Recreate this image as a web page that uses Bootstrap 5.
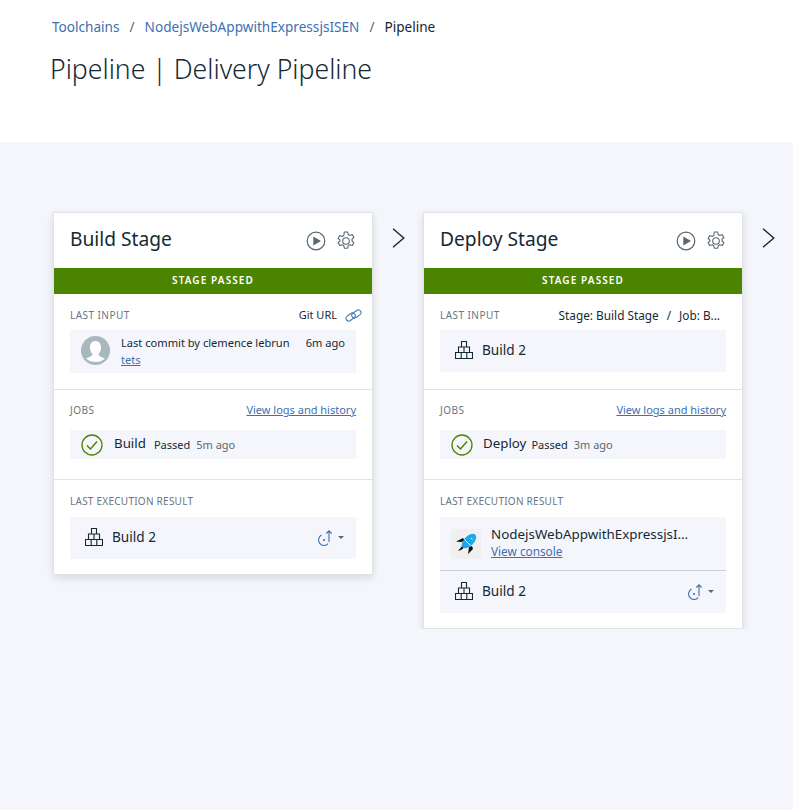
<!DOCTYPE html>
<html lang="en">
<head>
    <meta charset="UTF-8" />
    <title>Pipeline | Delivery Pipeline</title>
    <link href="https://cdn.jsdelivr.net/npm/bootstrap@5.3.2/dist/css/bootstrap.min.css" rel="stylesheet" />
    <style>
        body { font-family: "Noto Sans", "Open Sans", sans-serif; color: #152935; background: #f4f6fb; font-size: 12px; }
        a { color: #3d70b2; }
        .page-head { height: 142px; background: #fff; padding: 18px 0 0 52px; }
        .page-head .breadcrumb { font-size: 13.6px; margin-bottom: 16px; height: 18px; line-height: 18px; --bs-breadcrumb-item-padding-x: 10px; --bs-breadcrumb-divider-color: #5a6872; }
        .page-head .breadcrumb a { text-decoration: none; }
        .page-head .breadcrumb-item.active { color: #152935; }
        .page-title { font-size: 26.6px; font-weight: 300; line-height: 34px; margin: 0 0 0 -2px; color: #152935; }
        .board { padding: 70px 0 0 53px; }
        .stage-card { width: 320px; border: 1px solid #dfe3e6; border-radius: 0; box-shadow: 0 3px 8px rgba(0, 0, 0, .12); background: #fff; }
        .stage-top { height: 55px; padding: 0 16px; }
        .stage-name { font-size: 19.2px; margin: 0 0 4px; font-weight: 400; line-height: 1; }
        .stage-status { height: 26px; line-height: 24px; background: #4b8400; color: #fff; font-size: 10px; font-weight: 600; letter-spacing: 1.1px; text-align: center; }
        .stage-part { padding: 14px 16px 16px; border-bottom: 1px solid #dfe3e6; }
        .stage-part.first { height: 96px; }
        .stage-part.jobs { height: 90px; padding-top: 13px; }
        .stage-part.last { border-bottom: 0; padding-bottom: 15px; }
        .part-label { height: 14px; line-height: 14px; margin-bottom: 9px; font-size: 10px; letter-spacing: .25px; color: #69767f; }
        .part-head { height: 14px; line-height: 14px; margin-bottom: 8px; }
        .jobs .part-head { margin-bottom: 13px; }
        .part-head .part-label { margin: 0; letter-spacing: .45px; }
        .part-head a { font-size: 11px; }
        .git-link { font-size: 11px; margin-right: -6px; }
        .input-path { font-size: 11.8px; padding-right: 6px; }
        .path-slash { margin: 0 8px; }
        .inset-box { background: #f4f6fb; }
        .commit-box { height: 43px; padding: 0 11px 2px; font-size: 11.1px; line-height: 17px; }
        .commit-avatar { margin-right: 11px; }
        .build-box { height: 42px; padding: 0 12px 2px 15px; font-size: 13.6px; }
        .build-icon { margin-right: 9px; }
        .job-box { height: 29px; padding: 0 11px; }
        .job-name { font-size: 13.3px; margin: 0 8px 0 11px; padding-bottom: 2px; }
        .job-name.tight { margin: 0 5px 0 10px; }
        .job-state { font-size: 11px; margin-right: 6px; padding-top: 2px; }
        .job-time { font-size: 11px; color: #5a6872; padding-top: 2px; }
        .app-box { height: 54px; padding: 0 11px; border-bottom: 1px solid #c7d2d9; }
        .app-tile { width: 30px; height: 30px; background: #f0f0f0; flex: none; border-radius: 2px; margin-right: 10px; }
        .app-name { font-size: 13.4px; line-height: 17px; }
        .app-link { font-size: 11.8px; line-height: 17px; }
        .next-stage { width: 50px; padding-top: 16px; }
        .caret-down { width: 0; height: 0; border-left: 3.5px solid transparent; border-right: 3.5px solid transparent; border-top: 3.5px solid #5a6872; }
        .play-icon { margin-right: 10px; }
        .restore-icon { margin: 2px 6px 0 0; }
    </style>
</head>
<body>
    <svg width="0" height="0" class="d-block" aria-hidden="true">
        <symbol id="blocks" viewBox="0 0 18 18">
            <path d="M6.500.5h5v5.500h-5zM3.500 6h11v5.500h-11zM9 6v5.500M.5 11.500h17v6H.5zM6.200 11.500v6M11.800 11.500v6" fill="none" stroke="#152935" stroke-width="1.100" />
        </symbol>
        <symbol id="rollback" viewBox="0 0 14 16">
            <path d="M3.500 5.100A5.500 5.500 0 1 0 10.200 13.600" fill="none" stroke="#3d70b2" stroke-width="1.100" />
            <path d="M11 12V.8M8.300 3.500 11 .8l2.700 2.700" fill="none" stroke="#3d70b2" stroke-width="1.100" />
            <circle cx="6" cy="10" r="1.100" fill="#3d70b2" />
        </symbol>
        <symbol id="play" viewBox="0 0 20 20">
            <circle cx="10" cy="10" r="8.800" fill="none" stroke="#5a6872" stroke-width="1.200" />
            <path d="M7.300 5.400 15 10l-7.700 4.600z" fill="#5a6872" />
        </symbol>
        <symbol id="gear" viewBox="0 0 20 20">
            <path d="M8.300 1h3.400l.5 2.500 1.600.9 2.400-.8 1.700 2.900-1.900 1.700v1.800l1.900 1.700-1.700 2.900-2.400-.8-1.600.9-.5 2.500H8.300l-.5-2.500-1.600-.9-2.400.8-1.700-2.900 1.900-1.700V9.200L2.100 7.500l1.700-2.900 2.400.8 1.600-.9z" fill="none" stroke="#5a6872" stroke-width="1.100" stroke-linejoin="round" />
            <circle cx="10" cy="10" r="3.300" fill="none" stroke="#5a6872" stroke-width="1.100" />
        </symbol>
        <symbol id="chevron" viewBox="0 0 13 20">
            <path d="M1 .8 11.800 10 1 19.200" fill="none" stroke="#152935" stroke-width="1.400" />
        </symbol>
        <symbol id="passed" viewBox="0 0 22 22">
            <circle cx="11" cy="11" r="10" fill="none" stroke="#4b8400" stroke-width="1.300" />
            <path d="M6 11.500 9.500 15 16 7.500" fill="none" stroke="#4b8400" stroke-width="1.500" />
        </symbol>
    </svg>

    <header class="page-head">
        <nav aria-label="breadcrumb">
            <ol class="breadcrumb">
                <li class="breadcrumb-item"><a href="#">Toolchains</a></li>
                <li class="breadcrumb-item"><a href="#">NodejsWebAppwithExpressjsISEN</a></li>
                <li class="breadcrumb-item active" aria-current="page">Pipeline</li>
            </ol>
        </nav>
        <h1 class="page-title">Pipeline | Delivery Pipeline</h1>
    </header>

    <main class="board d-flex align-items-start">
        <section class="card stage-card flex-shrink-0">
            <div class="stage-top d-flex align-items-center">
                <h2 class="stage-name flex-grow-1">Build Stage</h2>
                <svg width="20" height="20" class="play-icon"><use href="#play" /></svg>
                <svg width="20" height="20"><use href="#gear" /></svg>
            </div>
            <div class="stage-status">STAGE PASSED</div>
            <div class="stage-part first">
                <div class="part-head d-flex justify-content-between align-items-center">
                    <div class="part-label">LAST INPUT</div>
                    <div class="git-link d-flex align-items-center gap-2">Git URL
                        <svg width="17" height="13" viewBox="0 0 17 13">
                            <rect x="0.600" y="5.300" width="10" height="5.400" rx="2.700" transform="rotate(-35 5.600 8)" fill="none" stroke="#3d70b2" stroke-width="1" />
                            <rect x="6.400" y="2.300" width="10" height="5.400" rx="2.700" transform="rotate(-35 11.400 5)" fill="none" stroke="#3d70b2" stroke-width="1" />
                        </svg>
                    </div>
                </div>
                <div class="inset-box commit-box d-flex align-items-center">
                    <svg width="29" height="29" viewBox="0 0 29 29" class="flex-shrink-0 commit-avatar">
                        <circle cx="14.500" cy="14.500" r="14.500" fill="#a9b8bf" />
                        <path d="M14.500 5c4 0 5.500 3 5.500 6.500 0 3-1.500 5.500-2.500 6.500 0 2 3 3 6.500 4.500a14.500 14.500 0 0 1-19 0c3.500-1.500 6.500-2.500 6.500-4.500-1-1-2.500-3.500-2.500-6.500C9 8 10.500 5 14.500 5z" fill="#fff" />
                    </svg>
                    <div class="flex-grow-1">
                        <div class="d-flex justify-content-between"><span>Last commit by clemence lebrun</span><span>6m ago</span></div>
                        <a href="#">tets</a>
                    </div>
                </div>
            </div>
            <div class="stage-part jobs">
                <div class="part-head d-flex justify-content-between align-items-center">
                    <div class="part-label">JOBS</div>
                    <a href="#">View logs and history</a>
                </div>
                <div class="inset-box job-box d-flex align-items-center">
                    <svg width="22" height="22"><use href="#passed" /></svg>
                    <span class="job-name">Build</span><span class="job-state">Passed</span><span class="job-time">5m ago</span>
                </div>
            </div>
            <div class="stage-part last">
                <div class="part-label">LAST EXECUTION RESULT</div>
                <div class="inset-box build-box d-flex align-items-center">
                    <svg width="18" height="18" class="build-icon"><use href="#blocks" /></svg>
                    <span class="flex-grow-1">Build 2</span>
                    <svg width="14" height="16" class="restore-icon"><use href="#rollback" /></svg>
                    <span class="caret-down"></span>
                </div>
            </div>
        </section>

        <div class="next-stage d-flex justify-content-center flex-shrink-0">
            <svg width="13" height="20"><use href="#chevron" /></svg>
        </div>

        <section class="card stage-card flex-shrink-0">
            <div class="stage-top d-flex align-items-center">
                <h2 class="stage-name flex-grow-1">Deploy Stage</h2>
                <svg width="20" height="20" class="play-icon"><use href="#play" /></svg>
                <svg width="20" height="20"><use href="#gear" /></svg>
            </div>
            <div class="stage-status">STAGE PASSED</div>
            <div class="stage-part first">
                <div class="part-head d-flex justify-content-between align-items-center">
                    <div class="part-label">LAST INPUT</div>
                    <div class="input-path">Stage: Build Stage<span class="path-slash">/</span>Job: B...</div>
                </div>
                <div class="inset-box build-box d-flex align-items-center">
                    <svg width="18" height="18" class="build-icon"><use href="#blocks" /></svg>
                    <span>Build 2</span>
                </div>
            </div>
            <div class="stage-part jobs">
                <div class="part-head d-flex justify-content-between align-items-center">
                    <div class="part-label">JOBS</div>
                    <a href="#">View logs and history</a>
                </div>
                <div class="inset-box job-box d-flex align-items-center">
                    <svg width="22" height="22"><use href="#passed" /></svg>
                    <span class="job-name tight">Deploy</span><span class="job-state">Passed</span><span class="job-time">3m ago</span>
                </div>
            </div>
            <div class="stage-part last">
                <div class="part-label">LAST EXECUTION RESULT</div>
                <div class="inset-box">
                    <div class="app-box d-flex align-items-center">
                        <div class="app-tile d-flex align-items-center justify-content-center">
                            <svg width="22" height="22" viewBox="0 0 22 22">
                                <path d="M1 8.500 8 5l2 3-4 1zM3 18l5-6 2 2-4 3zM13 21l1-7 3-1 1 3z" fill="#111" />
                                <ellipse cx="14" cy="8" rx="9" ry="4.800" transform="rotate(-45 14 8)" fill="#1ea7e8" />
                                <path d="M9.500 6.500l6 6M16 5l1.500 1.500" stroke="#fff" stroke-width="1" />
                            </svg>
                        </div>
                        <div>
                            <div class="app-name">NodejsWebAppwithExpressjsI…</div>
                            <a href="#" class="app-link">View console</a>
                        </div>
                    </div>
                    <div class="build-box d-flex align-items-center">
                        <svg width="18" height="18" class="build-icon"><use href="#blocks" /></svg>
                        <span class="flex-grow-1">Build 2</span>
                        <svg width="14" height="16" class="restore-icon"><use href="#rollback" /></svg>
                        <span class="caret-down"></span>
                    </div>
                </div>
            </div>
        </section>

        <div class="next-stage d-flex justify-content-center flex-shrink-0">
            <svg width="13" height="20"><use href="#chevron" /></svg>
        </div>
    </main>
    <script src="https://cdn.jsdelivr.net/npm/bootstrap@5.3.2/dist/js/bootstrap.bundle.min.js"></script>
</body>
</html>
